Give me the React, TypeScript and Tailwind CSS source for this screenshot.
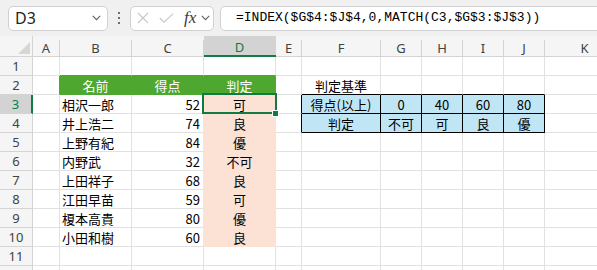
import React from 'react';

type Tone = 'grid' | 'green' | 'peach' | 'black';
type Fill = 'white' | 'green' | 'peach' | 'blue';

interface CellSpec {
  text?: string;
  bg: Fill;
  r: Tone;
  b: Tone;
  align: 'left' | 'center' | 'right';
  white?: boolean;
  indent?: boolean;
}

const rightCls: Record<Tone, string> = {
  grid: 'border-r-[#e1e1e1]',
  green: 'border-r-[#4ea72e]',
  peach: 'border-r-[#fbe2d5]',
  black: 'border-r-black',
};

const bottomCls: Record<Tone, string> = {
  grid: 'border-b-[#e1e1e1]',
  green: 'border-b-[#4ea72e]',
  peach: 'border-b-[#fbe2d5]',
  black: 'border-b-black',
};

const bgCls: Record<Fill, string> = {
  white: 'bg-white',
  green: 'bg-[#4ea72e]',
  peach: 'bg-[#fbe2d5]',
  blue: 'bg-[#c0e6f5]',
};

const alignCls = {
  left: 'justify-start pl-[2px]',
  center: 'justify-center',
  right: 'justify-end pr-[3px]',
};

const columns = ['A', 'B', 'C', 'D', 'E', 'F', 'G', 'H', 'I', 'J', 'K'];
const names = ['相沢一郎', '井上浩二', '上野有紀', '内野武', '上田祥子', '江田早苗', '榎本高貴', '小田和樹'];
const scores = [52, 74, 84, 32, 68, 59, 80, 60];
const grades = ['可', '良', '優', '不可', '良', '可', '優', '良'];
const criteria = [
  ['得点(以上)', '0', '40', '60', '80'],
  ['判定', '不可', '可', '良', '優'],
];

// row is 1-based like the sheet, col 0 = A
function specFor(row: number, col: number): CellSpec {
  const s: CellSpec = { bg: 'white', r: 'grid', b: 'grid', align: 'left' };

  if (row === 1 && col >= 1 && col <= 3) s.b = 'green';

  if (row === 2) {
    if (col === 0) s.r = 'green';
    if (col >= 1 && col <= 3) {
      s.bg = 'green';
      s.r = 'green';
      s.b = 'green';
      s.align = 'center';
      s.white = true;
      s.text = ['名前', '得点', '判定'][col - 1];
    }
    if (col === 5) {
      s.text = '判定基準';
      s.indent = true;
    }
    if (col >= 5 && col <= 9) s.b = 'black';
  }

  if (row >= 3 && row <= 10) {
    const i = row - 3;
    if (col === 1) s.text = names[i];
    if (col === 2) {
      s.text = String(scores[i]);
      s.align = 'right';
      s.r = 'peach';
    }
    if (col === 3) {
      s.text = grades[i];
      s.align = 'center';
      s.bg = 'peach';
      s.r = 'peach';
      s.b = 'peach';
    }
  }

  if (row === 3 || row === 4) {
    if (col === 4) s.r = 'black';
    if (col >= 5 && col <= 9) {
      s.bg = 'blue';
      s.r = 'black';
      s.b = 'black';
      s.align = 'center';
      s.text = criteria[row - 3][col - 5];
    }
  }

  return s;
}

const Chevron = ({ className }: { className?: string }) => (
  <svg width="9" height="6" viewBox="0 0 9 6" className={className}>
    <path d="M0.8 0.8 L4.5 4.6 L8.2 0.8" fill="none" stroke="#616161" strokeWidth="1.1" />
  </svg>
);

const FormulaBar = () => (
  <div className="flex items-center h-[36px] bg-[#f0f0f0]">
    <div className="ml-[8px] w-[100px] h-[25px] flex items-center justify-between bg-white border border-[#d1d1d1] rounded-[5px] pl-[6px] pr-[6px]">
      <span className="text-[16px] text-[#242424] font-['Noto_Sans',sans-serif] leading-none">D3</span>
      <Chevron />
    </div>
    <div className="w-[22px] flex flex-col items-center gap-[2.5px]">
      <span className="w-[2.5px] h-[2.5px] rounded-full bg-[#424242]" />
      <span className="w-[2.5px] h-[2.5px] rounded-full bg-[#424242]" />
      <span className="w-[2.5px] h-[2.5px] rounded-full bg-[#424242]" />
    </div>
    <div className="w-[84px] h-[25px] flex items-center bg-white border border-[#d1d1d1] rounded-[5px]">
      <svg width="12" height="12" viewBox="0 0 12 12" className="ml-[6px]">
        <path d="M1 1 L11 11 M11 1 L1 11" stroke="#c8c8c8" strokeWidth="1.1" />
      </svg>
      <svg width="15" height="10" viewBox="0 0 15 10" className="ml-[10px]">
        <path d="M0.8 5 L5 9.2 L14.2 0.6" fill="none" stroke="#c8c8c8" strokeWidth="1.1" />
      </svg>
      <span className="ml-[10px] text-[17px] italic text-[#3b3b3b] font-['Liberation_Serif',serif] leading-none pb-[2px]">fx</span>
      <Chevron className="ml-[5px]" />
    </div>
    <div className="ml-[6px] flex-1 -mr-[6px] h-[25px] flex items-center bg-white border border-[#d1d1d1] rounded-[5px] pl-[15px]">
      <span className="text-[13px] text-black font-['Liberation_Mono',monospace] whitespace-nowrap">
        =INDEX($G$4:$J$4,0,MATCH(C3,$G$3:$J$3))
      </span>
    </div>
  </div>
);

export default function App() {
  const rows = Array.from({ length: 12 }, (_, i) => i + 1);

  return (
    <div className="relative w-[597px] h-[270px] overflow-hidden bg-white font-['Noto_Sans_CJK_JP',sans-serif]">
      <FormulaBar />

      <div className="grid grid-cols-[33px_27px_72px_72px_72px_26px_79px_41px_41px_41px_41px_80px] grid-rows-[21px_repeat(12,19px)]">
        {/* corner */}
        <div className="relative bg-[#f5f5f5] border-r border-b border-[#d4d4d4]">
          <svg width="12" height="12" viewBox="0 0 12 12" className="absolute right-[2px] bottom-[2px]">
            <path d="M12 0 L12 12 L0 12 Z" fill="#d6d6d6" />
          </svg>
        </div>

        {columns.map((c) => {
          const active = c === 'D';
          return (
            <div
              key={c}
              className={
                active
                  ? 'bg-[#d3d3d3] border-b-2 border-[#107c41] flex'
                  : 'bg-[#f5f5f5] border-b border-[#d4d4d4] flex'
              }
            >
              <div className="mt-[4px] flex-1 border-r border-[#d4d4d4] flex items-center justify-center text-[13px] font-['Noto_Sans',sans-serif] leading-none">
                <span className={active ? 'text-[#107c41]' : 'text-[#424242]'}>{c}</span>
              </div>
            </div>
          );
        })}

        {rows.map((r) => (
          <React.Fragment key={r}>
            <div
              className={
                r === 3
                  ? 'bg-[#d3d3d3] border-r-2 border-r-[#107c41] border-b border-b-[#d4d4d4] flex items-center justify-center'
                  : 'bg-[#f5f5f5] border-r border-b border-[#d4d4d4] flex items-center justify-center'
              }
            >
              <span
                className={
                  r === 3
                    ? 'text-[13px] text-[#107c41] font-["Noto_Sans",sans-serif] leading-none'
                    : 'text-[13px] text-[#424242] font-["Noto_Sans",sans-serif] leading-none'
                }
              >
                {r < 12 ? r : ''}
              </span>
            </div>
            {columns.map((_, ci) => {
              const s = specFor(r, ci);
              return (
                <div
                  key={ci}
                  className={[
                    'flex items-center overflow-hidden whitespace-nowrap border-r border-b text-[13px] leading-none',
                    bgCls[s.bg],
                    rightCls[s.r],
                    bottomCls[s.b],
                    s.indent ? 'justify-start pl-[13px]' : alignCls[s.align],
                    s.white ? 'text-white' : 'text-black',
                  ].join(' ')}
                >
                  {s.text}
                </div>
              );
            })}
          </React.Fragment>
        ))}
      </div>

      {/* active cell D3 */}
      <div className="absolute left-[202px] top-[93px] w-[75px] h-[21px] border-2 border-[#107c41]" />
      <div className="absolute left-[272px] top-[110px] w-[7px] h-[7px] bg-[#107c41] border border-white" />
    </div>
  );
}
